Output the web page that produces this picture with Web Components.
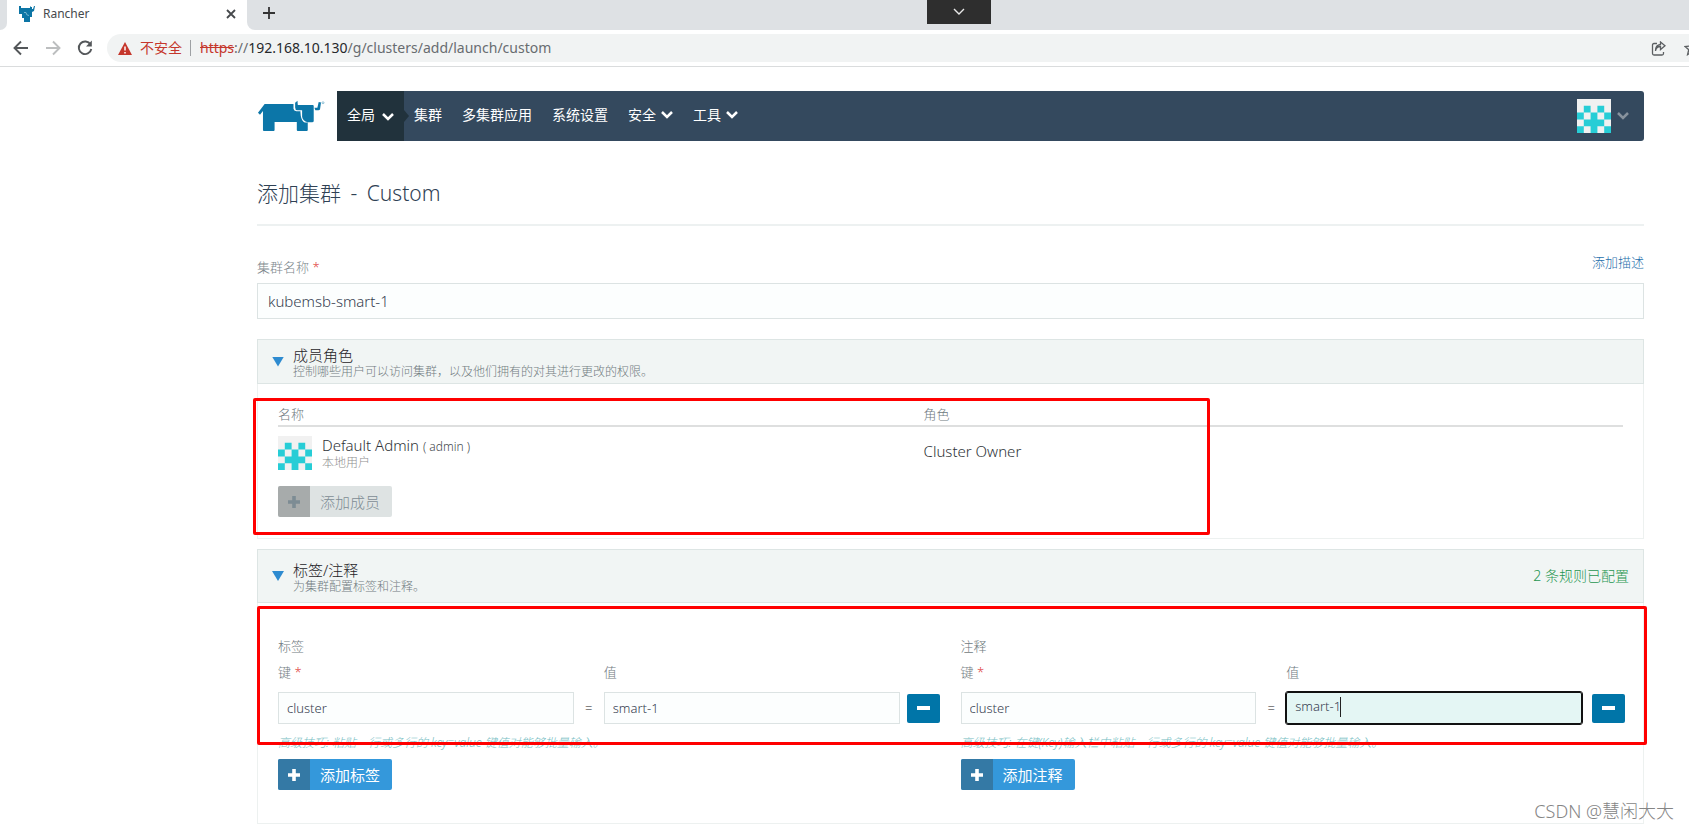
<!DOCTYPE html>
<html lang="zh-CN">
<head>
<meta charset="utf-8">
<title>Rancher</title>
<style>
  body {
    margin: 0;
    background: #fff;
    color: #3d4a57;
    font-family: "Noto Sans", "Noto Sans CJK SC", sans-serif;
    font-size: 15px;
    font-weight: 300;
    line-height: 20px;
  }
</style>
</head>
<body>
<rancher-page></rancher-page>

<template id="t-page">
  <style>
    :host { display: block; position: relative; }
    main { padding: 0 45px 0 257px; }
    h1 { margin: 0; padding: 37px 0 16px; font-size: 21px; line-height: 30px; font-weight: 300; color: #2f4154; border-bottom: 2px solid #edf1f1; }
    h1 span { margin: 0 4px; }
    .name-field { display: flex; flex-wrap: wrap; justify-content: space-between; padding-top: 26px; margin-bottom: 20px; }
    .name-field label { font-size: 13px; line-height: 31px; color: #7d878c; }
    .name-field a { font-size: 13px; line-height: 20px; color: #1f70ab; text-decoration: none; }
    .req { color: #e0403c; }
    .name-field input { box-sizing: border-box; width: 100%; height: 36px; border: 1px solid #dce3e3; background: #fcfefe; padding: 0 10px; font: inherit; color: #364050; outline: none; }
    table { width: calc(100% - 40px); margin: 0 20px; border-collapse: collapse; table-layout: fixed; text-align: left; }
    th { padding: 19px 0 0; height: 22px; font-size: 13px; font-weight: 300; color: #6f7a80; border-bottom: 2px solid #dedfdf; }
    th:first-child { width: 48%; }
    td { padding: 9px 0 0; color: #2e3338; }
    td.role { padding-top: 4px; }
    .user { display: flex; gap: 10px; }
    .user p { margin: 0; line-height: 18px; }
    .user small { font-size: 12px; line-height: 16px; color: #8f8f8f; }
    .user div > small { display: block; }
    .user p small { color: #44494d; }
    .add { margin: 15px 20px 21px; }
    .maps { display: grid; grid-template-columns: 1fr 1fr; padding: 33px 0 33px 20px; }
    .watermark { position: absolute; right: 15px; bottom: 0; font-size: 18px; line-height: 26px; color: #858585; }
  </style>
  <browser-chrome></browser-chrome>
  <main>
    <nav-bar></nav-bar>
    <h1>添加集群 <span>-</span> Custom</h1>
    <div class="name-field">
      <label for="cluster-name">集群名称 <span class="req">*</span></label>
      <a href="#description">添加描述</a>
      <input id="cluster-name" type="text" value="kubemsb-smart-1">
    </div>
    <accordion-section heading="成员角色" detail="控制哪些用户可以访问集群，以及他们拥有的对其进行更改的权限。">
      <table>
        <thead><tr><th scope="col">名称</th><th scope="col">角色</th></tr></thead>
        <tbody><tr>
          <td><div class="user"><user-avatar></user-avatar><div><p>Default Admin <small>( admin )</small></p><small>本地用户</small></div></div></td>
          <td class="role">Cluster Owner</td>
        </tr></tbody>
      </table>
      <add-button class="add" disabled>添加成员</add-button>
      <highlight-frame class="members"></highlight-frame>
    </accordion-section>
    <accordion-section class="labels" roomy heading="标签/注释" detail="为集群配置标签和注释。" status="2 条规则已配置">
      <div class="maps">
        <key-value heading="标签" add="添加标签" tip="高级技巧: 粘贴一行或多行的 key=value 键值对能够批量输入。"></key-value>
        <key-value heading="注释" add="添加注释" active tip="高级技巧: 在键(Key)输入栏中粘贴一行或多行的 key=value 键值对能够批量输入。"></key-value>
      </div>
      <highlight-frame class="rules"></highlight-frame>
    </accordion-section>
  </main>
  <div class="watermark">CSDN @慧闲大大</div>
</template>

<template id="t-chrome">
  <style>
    :host { display: block; position: relative; border-bottom: 1px solid #dadcdd; color: #46494c; font-weight: 400; }
    .tabs { display: flex; height: 30px; background: #dee1e4; }
    .edge { width: 7px; background: #fff; }
    .edge i { display: block; height: 30px; background: #dee1e4; border-radius: 0 0 7px 0; }
    .tab { box-sizing: border-box; width: 240px; display: flex; align-items: center; padding: 0 10px 3px 12px; background: #fff; font-size: 12px; }
    .tab span { flex: 1; padding-left: 7px; }
    button { display: grid; place-items: center; padding: 0; border: 0; background: none; color: inherit; }
    .rest { flex: 1; background: #fff; }
    .rest div { box-sizing: border-box; height: 30px; padding: 5px 14px; background: #dee1e4; border-radius: 0 0 0 8px; }
    .drop { position: absolute; top: 0; left: 927px; width: 64px; height: 24px; background: #2e2e2e; }
    .bar { display: flex; align-items: center; padding: 4px 0 4px 12px; gap: 14px; }
    .bar > button { width: 18px; height: 18px; }
    .address { flex: 1; display: flex; align-items: center; height: 28px; margin-left: -1px; padding-left: 11px; border-radius: 14px 0 0 14px; background: #f1f3f3; font-size: 14px; overflow: hidden; }
    .warn { color: #c5372c; padding: 0 8px; }
    .rule { width: 1px; height: 16px; background: #9ea1a4; margin-right: 9px; }
    .url { flex: 1; color: #686c70; font-family: "Noto Sans", sans-serif; }
    .url s { color: #c5372c; }
    .url b { color: #26282b; font-weight: 400; }
    .share { margin-right: 18px; }
    .star { margin-right: -11px; flex: none; }
  </style>
  <div class="tabs">
    <div class="edge"><i></i></div>
    <div class="tab">
      <svg width="17" height="18" viewBox="0 0 17 18"><path fill="#0c75a5" d="M0 1h2v2h9V1l1 1h1v2h1l1-3h1l-1 5-2 1v5h-2v5H5v-4H3V9H0z"/><path d="M5 7.500h2q0 3 3 3" fill="none" stroke="#73b3cf"/></svg>
      <span>Rancher</span>
      <button aria-label="关闭标签页"><svg width="12" height="12" viewBox="0 0 12 12"><path d="M2 2l8 8M10 2l-8 8" stroke="#46494c" stroke-width="1.800"/></svg></button>
    </div>
    <div class="rest"><div><button aria-label="新标签页"><svg width="16" height="16" viewBox="0 0 16 16"><path d="M8 2v12M2 8h12" stroke="#333" stroke-width="1.800"/></svg></button></div></div>
  </div>
  <button class="drop" aria-label="展开"><svg width="12" height="8" viewBox="0 0 12 8"><path d="M1 1l5 5 5-5" fill="none" stroke="#e8e8e8" stroke-width="1.400"/></svg></button>
  <div class="bar">
    <button aria-label="后退"><svg width="18" height="18" viewBox="0 0 18 18"><path d="M16 9H3M9 2.500L2.500 9 9 15.500" fill="none" stroke="#54575a" stroke-width="1.900"/></svg></button>
    <button aria-label="前进"><svg width="18" height="18" viewBox="0 0 18 18"><path d="M2 9h13M9 2.500L15.500 9 9 15.500" fill="none" stroke="#bcbebf" stroke-width="1.900"/></svg></button>
    <button aria-label="重新加载"><svg width="18" height="18" viewBox="0 0 18 18"><path d="M14.500 5.500A6.300 6.300 0 1 0 15.300 10" fill="none" stroke="#54575a" stroke-width="1.900"/><path d="M15.800 1.500v6H10z" fill="#54575a"/></svg></button>
    <div class="address">
      <svg width="14" height="13" viewBox="0 0 14 13"><path d="M7 0l7 13H0z" fill="#c5372c"/><path d="M7 4.500v4M7 10v1.500" stroke="#fff" stroke-width="1.500"/></svg>
      <span class="warn">不安全</span><span class="rule"></span>
      <span class="url"><s>https</s>://<b>192.168.10.130</b>/g/clusters/add/launch/custom</span>
      <svg class="share" width="15" height="15" viewBox="0 0 15 15" fill="none" stroke="#5c5f62" stroke-width="1.300"><path d="M6 2.500H3q-1.500 0-1.500 1.500v8.500Q1.500 14 3 14h8q1.500 0 1.500-1.500V11M4.500 10Q5 5.500 9.500 5.500V8.500L14 4.700 9.500 1v2.500Q4.500 4 4.500 10z"/></svg>
      <svg class="star" width="16" height="16" viewBox="0 0 16 16" fill="none" stroke="#5c5f62" stroke-width="1.400"><path d="M8 1.500l2 4.500 5 .5-3.800 3.200 1.200 4.800L8 12l-4.400 2.500 1.200-4.800L1 6.500 6 6z"/></svg>
    </div>
  </div>
</template>

<template id="t-nav">
  <style>
    :host { display: flex; align-items: center; padding-top: 24px; }
    .logo { width: 80px; height: 32px; }
    .logo svg { display: block; }
    nav { flex: 1; display: flex; align-items: stretch; height: 50px; background: #34495e; border-radius: 0 3px 3px 0; font-size: 14px; font-weight: 400; }
    nav a { display: flex; align-items: center; gap: 5px; padding: 0 10px 3px; color: #fff; text-decoration: none; }
    nav a.on { position: relative; gap: 7px; background: #21323c; }
    nav a.on::after { content: ""; position: absolute; left: 100%; top: 19px; border: 6px solid transparent; border-left: 5px solid #21323c; border-right: 0; }
    nav a.on chevron-icon { padding-top: 5px; }
    button { display: flex; align-items: center; gap: 6px; margin-left: auto; padding: 0 15px 0 0; border: 0; background: none; }
  </style>
  <a class="logo" href="#home" aria-label="Rancher"><svg width="68" height="32" viewBox="50 60 205 96">
    <g fill="#0c76a8"><path d="M73 72H160V86Q161 93 169 94H181V97Q182 119 190 125Q196 129 203 127V150Q203 153 200 153H173Q170 153 170 150V126H103V150Q103 153 100 153H71Q68 153 68 150V93L59 104L53 98Z"/><path d="M165 68L172 62L173 75H218Q221 75 221 78V123Q221 127 216 127H203Q188 123 186 110V91H172Q165 90 165 82Z"/><path d="M223 83H232L236 66L243 67L240 88Q239 91 235 91H226Z"/></g>
    <circle cx="249" cy="68" r="3" fill="none" stroke="#5ba2c3" stroke-width="2"/>
  </svg></a>
  <nav>
    <a class="on" href="#global">全局 <chevron-icon></chevron-icon></a>
    <a href="#clusters">集群</a>
    <a href="#apps">多集群应用</a>
    <a href="#settings">系统设置</a>
    <a href="#security">安全 <chevron-icon></chevron-icon></a>
    <a href="#tools">工具 <chevron-icon></chevron-icon></a>
    <button aria-label="用户菜单"><user-avatar></user-avatar><chevron-icon style="color:#87929d"></chevron-icon></button>
  </nav>
</template>

<template id="t-chevron">
  <style>:host { display: block; color: #fff; } svg { display: block; }</style>
  <svg width="12" height="8" viewBox="0 0 12 8"><path d="M1 1l5 5 5-5" fill="none" stroke="currentColor" stroke-width="2.500"/></svg>
</template>

<template id="t-avatar">
  <style>:host { display: block; } svg { display: block; }</style>
  <svg width="34" height="34" viewBox="0 0 5 5"><path fill="#f1f1f1" d="M0 0h5v5H0z"/><path fill="#27cdd6" d="M1 1h1v1H1zM3 1h1v1H3zM0 2h1v1H0zM2 2h1v1H2zM4 2h1v1H4zM1 3h3v1H1zM0 4h1v1H0zM2 4h1v1H2zM4 4h1v1H4z"/></svg>
</template>

<template id="t-section">
  <style>
    :host { display: block; position: relative; margin-bottom: 10px; }
    header { box-sizing: border-box; display: flex; align-items: center; padding: 3px 14px; min-height: 45px; border: 1px solid #dde5e4; background: #f1f5f4; }
    :host([roomy]) header { min-height: 54px; }
    .toggle { width: 12px; height: 10px; padding: 0; border: 0; background: #2e8bd0; clip-path: polygon(0 0, 100% 0, 50% 100%); margin-right: 9px; }
    .text { padding-top: 3px; }
    h2 { margin: 0; font-size: 15px; line-height: 18px; font-weight: 300; color: #1f2428; }
    p { margin: 0; font-size: 12px; line-height: 16px; color: #727c81; }
    .status { margin-left: auto; font-size: 14px; color: #1f9650; }
    .body { display: flow-root; border: 1px solid #edf1f0; border-top: 0; }
  </style>
  <header><button class="toggle" aria-label="折叠"></button><div class="text"><h2></h2><p></p></div><span class="status"></span></header>
  <div class="body"><slot></slot></div>
</template>

<template id="t-add">
  <style>
    :host { display: flex; }
    button { display: flex; align-items: center; height: 31px; padding: 0; border: 0; border-radius: 2px; overflow: hidden; background: #3498db; color: #fff; font: inherit; font-size: 15px; font-weight: 400; }
    .plus { display: grid; place-items: center; width: 32px; height: 31px; background: #3479a5; }
    .text { padding: 0 12px 0 10px; }
    button:disabled { background: #dee3e3; color: #7d8c94; font-weight: 300; }
    button:disabled .plus { background: #a7abab; }
  </style>
  <button><span class="plus"><svg width="12" height="12" viewBox="0 0 12 12"><path d="M6 0v12M0 6h12" stroke="currentColor" stroke-width="3.600"/></svg></span><span class="text"><slot></slot></span></button>
</template>

<template id="t-kv">
  <style>
    :host { display: block; --remove-gap: 7px; font-size: 13px; color: #6f7a80; }
    :host([active]) { --remove-gap: 10px; }
    h3 { margin: 0; font-size: 13px; line-height: 20px; font-weight: 300; }
    .row { display: grid; grid-template-columns: 1fr 30px 1fr 61px; align-items: center; }
    label { line-height: 32px; }
    .req { color: #e0403c; }
    .eq { text-align: center; color: #222; }
    .inputs { margin-top: 4px; }
    .field { position: relative; }
    input { display: block; box-sizing: border-box; width: 100%; height: 32px; border: 1px solid #dce3e3; background: #fcfefe; padding: 0 8px; font: inherit; color: #364050; outline: none; }
    :host([active]) .value input { background: #e4f6f4; border-color: #111; outline: 1px solid #111; border-radius: 2px; padding-bottom: 4px; }
    .caret { display: none; position: absolute; left: 54px; top: 5px; width: 1px; height: 20px; background: #222; }
    :host([active]) .caret { display: block; }
    button { width: 33px; height: 29px; margin-left: var(--remove-gap); padding: 0; border: 0; border-radius: 2px; background: #0075a8; display: grid; place-items: center; }
    button i { width: 13px; height: 4px; background: #fff; }
    .tip { margin: 9px 0 6px; font-size: 12px; line-height: 20px; font-style: italic; color: #75bdc2; }
  </style>
  <h3></h3>
  <div class="row"><label for="k">键 <span class="req">*</span></label><span></span><label for="v">值</label></div>
  <div class="row inputs">
    <div class="field"><input id="k" type="text" value="cluster"></div>
    <span class="eq">=</span>
    <div class="field value"><input id="v" type="text" value="smart-1"><span class="caret"></span></div>
    <button aria-label="删除"><i></i></button>
  </div>
  <p class="tip"></p>
  <add-button></add-button>
</template>

<template id="t-frame">
  <style>
    :host { position: absolute; box-sizing: border-box; border: 3px solid #f00; border-radius: 2px; pointer-events: none; }
    :host(.members) { top: 59px; bottom: 4px; left: -4px; width: 69%; }
    :host(.rules) { top: 57px; height: 139px; left: 0; right: -3px; }
  </style>
</template>

<script>
  class TemplateElement extends HTMLElement {
    constructor() {
      super();
      this.attachShadow({ mode: "open" });
      this.shadowRoot.append(document.getElementById(this.constructor.template).content.cloneNode(true));
    }
    fill(selector, attribute) {
      this.shadowRoot.querySelector(selector).textContent = this.getAttribute(attribute) || "";
    }
  }
  customElements.define("chevron-icon", class extends TemplateElement { static template = "t-chevron"; });
  customElements.define("user-avatar", class extends TemplateElement { static template = "t-avatar"; });
  customElements.define("highlight-frame", class extends TemplateElement { static template = "t-frame"; });
  customElements.define("browser-chrome", class extends TemplateElement { static template = "t-chrome"; });
  customElements.define("nav-bar", class extends TemplateElement { static template = "t-nav"; });
  customElements.define("add-button", class extends TemplateElement {
    static template = "t-add";
    connectedCallback() {
      this.shadowRoot.querySelector("button").disabled = this.hasAttribute("disabled");
    }
  });
  customElements.define("accordion-section", class extends TemplateElement {
    static template = "t-section";
    connectedCallback() {
      this.fill("h2", "heading");
      this.fill("p", "detail");
      this.fill(".status", "status");
    }
  });
  customElements.define("key-value", class extends TemplateElement {
    static template = "t-kv";
    connectedCallback() {
      this.fill("h3", "heading");
      this.fill(".tip", "tip");
      this.fill("add-button", "add");
    }
  });
  customElements.define("rancher-page", class extends TemplateElement { static template = "t-page"; });
</script>
</body>
</html>
